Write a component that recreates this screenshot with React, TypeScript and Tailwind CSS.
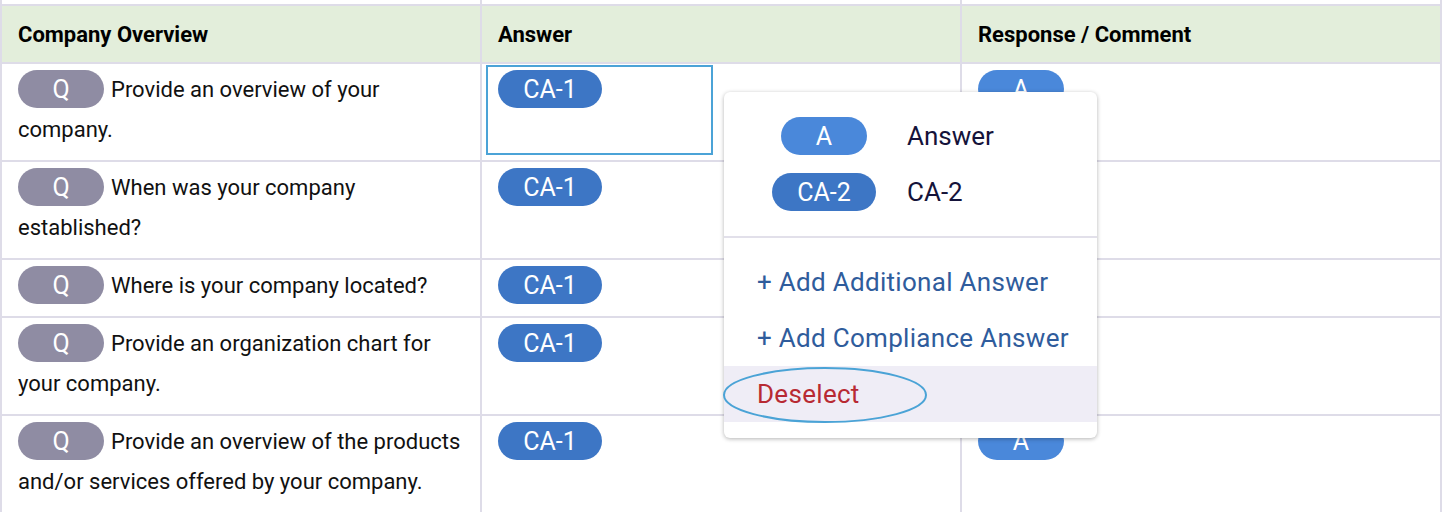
const rows = [
  "Provide an overview of your company.",
  "When was your company established?",
  "Where is your company located?",
  "Provide an organization chart for your company.",
  "Provide an overview of the products and/or services offered by your company.",
];

function Pill({ label, color, width }: { label: string; color: string; width: string }) {
  return (
    <span
      className={`inline-flex h-[38px] items-center justify-center rounded-full align-top text-[25px] leading-none text-white ${color} ${width}`}
    >
      {label}
    </span>
  );
}

function Menu() {
  return (
    <div className="absolute left-[724px] top-[92px] w-[373px] rounded-md bg-white shadow-[0_1px_4px_rgba(0,0,0,0.3)]">
      <div className="py-4">
        <div className="flex h-[56px] items-center pl-12">
          <div className="flex w-[104px] justify-center">
            <Pill label="A" color="bg-[#4a88da]" width="w-[86px]" />
          </div>
          <span className="ml-[31px] text-[26px] text-[#15133a]">Answer</span>
        </div>
        <div className="flex h-[56px] items-center pl-12">
          <div className="flex w-[104px] justify-center">
            <Pill label="CA-2" color="bg-[#3d76c5]" width="w-[104px]" />
          </div>
          <span className="ml-[31px] text-[26px] text-[#15133a]">CA-2</span>
        </div>
      </div>
      <div className="h-[2px] bg-[#e2e0ea]" />
      <div className="py-4">
        <div className="flex h-[56px] items-center pl-[33px] text-[26px] tracking-[0.3px] text-[#2f5c9c]">
          + Add Additional Answer
        </div>
        <div className="flex h-[56px] items-center pl-[33px] text-[26px] tracking-[0.3px] text-[#2f5c9c]">
          + Add Compliance Answer
        </div>
        <div className="flex h-[56px] items-center bg-[#efedf6] pl-[33px] text-[26px] tracking-[0.3px] text-[#b82a33]">
          Deselect
        </div>
      </div>
    </div>
  );
}

export default function App() {
  const cell = "border-r-2 border-b-2 border-[#dedce8]";
  return (
    <div
      className="relative h-[512px] w-[1444px] overflow-hidden bg-white text-[#111]"
      style={{ fontFamily: "Roboto, 'Liberation Sans', sans-serif" }}
    >
      <div className="grid w-[1442px] grid-cols-[480px_480px_480px] border-l-2 border-[#dedce8]">
        <div className={`h-[6px] ${cell}`} />
        <div className={`h-[6px] ${cell}`} />
        <div className={`h-[6px] ${cell}`} />

        <div className={`flex h-[58px] items-center bg-[#e3eedb] px-4 text-[22px] font-bold text-black ${cell}`}>
          Company Overview
        </div>
        <div className={`flex h-[58px] items-center bg-[#e3eedb] px-4 text-[22px] font-bold text-black ${cell}`}>
          Answer
        </div>
        <div className={`flex h-[58px] items-center bg-[#e3eedb] px-4 text-[22px] font-bold text-black ${cell}`}>
          Response / Comment
        </div>

        {rows.map((q, i) => (
          <div key={i} className="contents">
            <div className={`px-4 pt-[6px] pb-[10px] text-[22px] leading-[40px] ${cell}`}>
              <Pill label="Q" color="bg-[#8f8ca3]" width="w-[86px]" />
              <span className="ml-[7px]">{q}</span>
            </div>
            <div className={`relative px-4 pt-[6px] ${cell}`}>
              <Pill label="CA-1" color="bg-[#3d76c5]" width="w-[104px]" />
              {i === 0 && (
                <div className="absolute left-[4px] top-[1px] h-[90px] w-[227px] border-2 border-[#4ba3d7]" />
              )}
            </div>
            <div className={`px-4 pt-[6px] ${cell}`}>
              <Pill label="A" color="bg-[#4a88da]" width="w-[86px]" />
            </div>
          </div>
        ))}
      </div>

      <Menu />

      <svg className="absolute left-[722px] top-[366px]" width="206" height="58" viewBox="0 0 206 58">
        <ellipse cx="103" cy="29" rx="101" ry="27" fill="none" stroke="#4aa3d6" strokeWidth="2" />
      </svg>
    </div>
  );
}
